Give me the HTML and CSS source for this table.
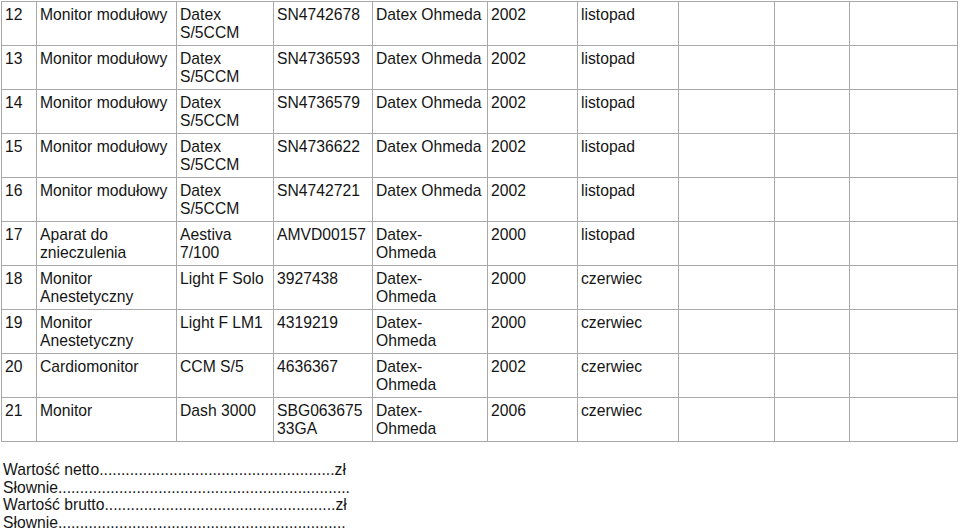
FILE: index.html
```html
<!DOCTYPE html>
<html lang="pl">
<head>
<meta charset="utf-8">
<title>Wykaz sprzętu</title>
<link rel="stylesheet" href="styles.css">
</head>
<body>
<table class="grid">
  <colgroup>
    <col class="c-lp"><col class="c-name"><col class="c-model"><col class="c-sn"><col class="c-prod">
    <col class="c-year"><col class="c-month"><col class="c-e1"><col class="c-e2"><col class="c-e3">
  </colgroup>
  <tbody>
    <tr><td>12</td><td>Monitor modułowy</td><td>Datex<br>S/5CCM</td><td>SN4742678</td><td>Datex Ohmeda</td><td>2002</td><td>listopad</td><td></td><td></td><td></td></tr>
    <tr><td>13</td><td>Monitor modułowy</td><td>Datex<br>S/5CCM</td><td>SN4736593</td><td>Datex Ohmeda</td><td>2002</td><td>listopad</td><td></td><td></td><td></td></tr>
    <tr><td>14</td><td>Monitor modułowy</td><td>Datex<br>S/5CCM</td><td>SN4736579</td><td>Datex Ohmeda</td><td>2002</td><td>listopad</td><td></td><td></td><td></td></tr>
    <tr><td>15</td><td>Monitor modułowy</td><td>Datex<br>S/5CCM</td><td>SN4736622</td><td>Datex Ohmeda</td><td>2002</td><td>listopad</td><td></td><td></td><td></td></tr>
    <tr><td>16</td><td>Monitor modułowy</td><td>Datex<br>S/5CCM</td><td>SN4742721</td><td>Datex Ohmeda</td><td>2002</td><td>listopad</td><td></td><td></td><td></td></tr>
    <tr><td>17</td><td>Aparat do<br>znieczulenia</td><td>Aestiva<br>7/100</td><td>AMVD00157</td><td>Datex-<br>Ohmeda</td><td>2000</td><td>listopad</td><td></td><td></td><td></td></tr>
    <tr><td>18</td><td>Monitor<br>Anestetyczny</td><td>Light F Solo</td><td>3927438</td><td>Datex-<br>Ohmeda</td><td>2000</td><td>czerwiec</td><td></td><td></td><td></td></tr>
    <tr><td>19</td><td>Monitor<br>Anestetyczny</td><td>Light F LM1</td><td>4319219</td><td>Datex-<br>Ohmeda</td><td>2000</td><td>czerwiec</td><td></td><td></td><td></td></tr>
    <tr><td>20</td><td>Cardiomonitor</td><td>CCM S/5</td><td>4636367</td><td>Datex-<br>Ohmeda</td><td>2002</td><td>czerwiec</td><td></td><td></td><td></td></tr>
    <tr><td>21</td><td>Monitor</td><td>Dash 3000</td><td>SBG063675<br>33GA</td><td>Datex-<br>Ohmeda</td><td>2006</td><td>czerwiec</td><td></td><td></td><td></td></tr>
  </tbody>
</table>
<div class="totals">
  <p>Wartość netto......................................................zł</p>
  <p>Słownie...................................................................</p>
  <p>Wartość brutto.....................................................zł</p>
  <p>Słownie..................................................................</p>
</div>
</body>
</html>
```
FILE: styles.css
```css
html, body {
  margin: 0;
  padding: 0;
  background: #ffffff;
}
body {
  font-family: "Liberation Sans", Arial, sans-serif;
  font-size: 15.7px;
  color: #151515;
  padding: 1px 0 0 1px;
}
.grid {
  border-collapse: collapse;
  table-layout: fixed;
  width: 957px;
}
.grid td {
  border: 1px solid #a8a8a8;
  padding: 4px 3px 3px 3px;
  line-height: 18px;
  height: 36px;
  vertical-align: top;
  white-space: nowrap;
  overflow: visible;
}
.c-lp { width: 35px; }
.c-name { width: 140px; }
.c-model { width: 97px; }
.c-sn { width: 99px; }
.c-prod { width: 115px; }
.c-year { width: 90px; }
.c-month { width: 101px; }
.c-e1 { width: 96px; }
.c-e2 { width: 75px; }
.c-e3 { width: 108px; }
.totals {
  margin-top: 19px;
  padding-left: 2px;
}
.totals p {
  margin: 0;
  line-height: 17.7px;
  white-space: nowrap;
}
```
